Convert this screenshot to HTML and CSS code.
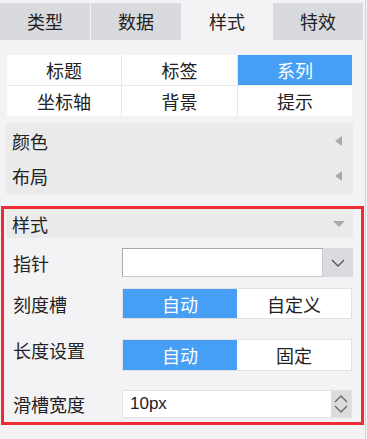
FILE: index.html
```html
<!DOCTYPE html>
<html lang="zh">
<head>
    <meta charset="UTF-8">
    <meta name="viewport" content="width=device-width, initial-scale=1.0">
    <title>样式</title>
    <link rel="stylesheet" href="styles.css">
</head>
<body>
    <div class="panel">
        <div class="tabs">
            <div class="tab">类型</div>
            <div class="tab">数据</div>
            <div class="tab active">样式</div>
            <div class="tab">特效</div>
        </div>

        <!-- sub tabs -->
        <div class="seg-grid">
            <div class="cell">标题</div>
            <div class="cell">标签</div>
            <div class="cell active">系列</div>
            <div class="cell">坐标轴</div>
            <div class="cell">背景</div>
            <div class="cell">提示</div>
        </div>

        <div class="fold-group">
            <div class="fold">颜色<span class="tri-left"></span></div>
            <div class="fold">布局<span class="tri-left"></span></div>
        </div>

        <div class="section">
            <div class="section-head">样式<span class="tri-down"></span></div>

            <div class="row row-pointer">
                <div class="label">指针</div>
                <div class="select">
                    <div class="select-input"></div>
                    <div class="select-btn">
                        <svg width="14" height="8" viewBox="0 0 14 8"><path d="M1 1 L7 7 L13 1" fill="none" stroke="#555" stroke-width="1.3"/></svg>
                    </div>
                </div>
            </div>

            <div class="row row-groove">
                <div class="label">刻度槽</div>
                <div class="btn-group">
                    <div class="opt active">自动</div>
                    <div class="opt">自定义</div>
                </div>
            </div>

            <div class="row row-length">
                <div class="label">长度设置</div>
                <div class="btn-group">
                    <div class="opt active">自动</div>
                    <div class="opt">固定</div>
                </div>
            </div>

            <div class="row row-width">
                <div class="label">滑槽宽度</div>
                <div class="spin">
                    <div class="spin-value">10px</div>
                    <div class="spin-btns">
                        <svg width="14" height="8" viewBox="0 0 14 8"><path d="M1 7 L7 1 L13 7" fill="none" stroke="#666" stroke-width="1.3"/></svg>
                        <svg width="14" height="8" viewBox="0 0 14 8"><path d="M1 1 L7 7 L13 1" fill="none" stroke="#666" stroke-width="1.3"/></svg>
                    </div>
                </div>
            </div>
        </div>
    </div>
</body>
</html>
```

FILE: styles.css
```css
* {
    margin: 0;
    padding: 0;
    box-sizing: border-box;
}

body {
    font-family: "Noto Sans CJK SC", "Noto Sans", sans-serif;
    font-size: 18px;
    color: #222;
    background: #f3f3f6;
}

.panel {
    width: 366px;
    height: 439px;
    border-right: 1px solid #d4d4d8;
}

.tabs {
    display: grid;
    grid-template-columns: repeat(4, 90px);
    gap: 1px;
    padding-top: 3px;
}

.tab {
    height: 37px;
    line-height: 37px;
    text-align: center;
    background: #d9dadd;
}

.tab.active {
    background: #f3f3f6;
}

.seg-grid {
    display: grid;
    grid-template-columns: 114px 115px 114px;
    grid-auto-rows: 30px;
    gap: 1px;
    width: 345px;
    margin: 15px 0 0 7px;
    background: #e8e8ea;
}

.cell {
    background: #fff;
    text-align: center;
    line-height: 30px;
}

.cell.active {
    background: #479ef5;
    color: #fff;
}

.fold-group {
    width: 347px;
    margin: 7px 0 0 6px;
    background: #ebebeb;
}

.fold {
    display: flex;
    align-items: center;
    justify-content: space-between;
    height: 35.5px;
    padding: 0 11px 0 6px;
}

.tri-left {
    width: 0;
    height: 0;
    border-top: 5px solid transparent;
    border-bottom: 5px solid transparent;
    border-right: 7px solid #aaa;
}

.section {
    width: 363px;
    margin: 12px 0 0 1px;
    border: 3px solid #ee2a35;
    padding-bottom: 4px;
}

.section-head {
    display: flex;
    align-items: center;
    justify-content: space-between;
    width: 347px;
    height: 29px;
    margin-left: 2px;
    padding: 0 8px 0 6px;
    background: #ebebeb;
}

.tri-down {
    width: 0;
    height: 0;
    border-left: 6px solid transparent;
    border-right: 6px solid transparent;
    border-top: 6px solid #aaa;
}

.row {
    display: flex;
    align-items: center;
}

.label {
    width: 118px;
    padding-left: 9px;
    line-height: 20px;
}

.row-pointer {
    margin-top: 10px;
}

.row-groove {
    margin-top: 11px;
}

.row-length {
    margin-top: 20px;
    align-items: flex-start;
}

.row-length .label {
    margin-top: 1px;
}

.row-width {
    margin-top: 19px;
}

.select {
    display: flex;
    width: 231px;
    height: 29px;
}

.select-input {
    flex: 1;
    background: #fff;
    border: 1px solid #c8c8c8;
    border-top-color: #a9a9a9;
    border-left-color: #a9a9a9;
}

.select-btn {
    width: 30px;
    display: flex;
    align-items: center;
    justify-content: center;
    background: #dadbde;
}

.btn-group {
    display: flex;
    width: 230px;
    border: 1px solid #e2e2e4;
    background: #fff;
}

.row-groove .btn-group {
    height: 31px;
}

.row-length .btn-group {
    height: 32px;
}

.opt {
    flex: 1;
    display: flex;
    align-items: center;
    justify-content: center;
}

.opt.active {
    background: #479ef5;
    color: #fff;
}

.spin {
    display: flex;
    width: 230px;
    height: 28px;
    background: #fff;
    border: 1px solid #e2e2e4;
}

.spin-value {
    flex: 1;
    padding-left: 7px;
    font-family: "Liberation Sans", sans-serif;
    font-size: 17px;
    line-height: 26px;
    color: #1a1a2a;
}

.spin-btns {
    width: 20px;
    display: flex;
    flex-direction: column;
    align-items: center;
    justify-content: space-around;
    background: #dcdcde;
    padding: 3px 0;
}
```
